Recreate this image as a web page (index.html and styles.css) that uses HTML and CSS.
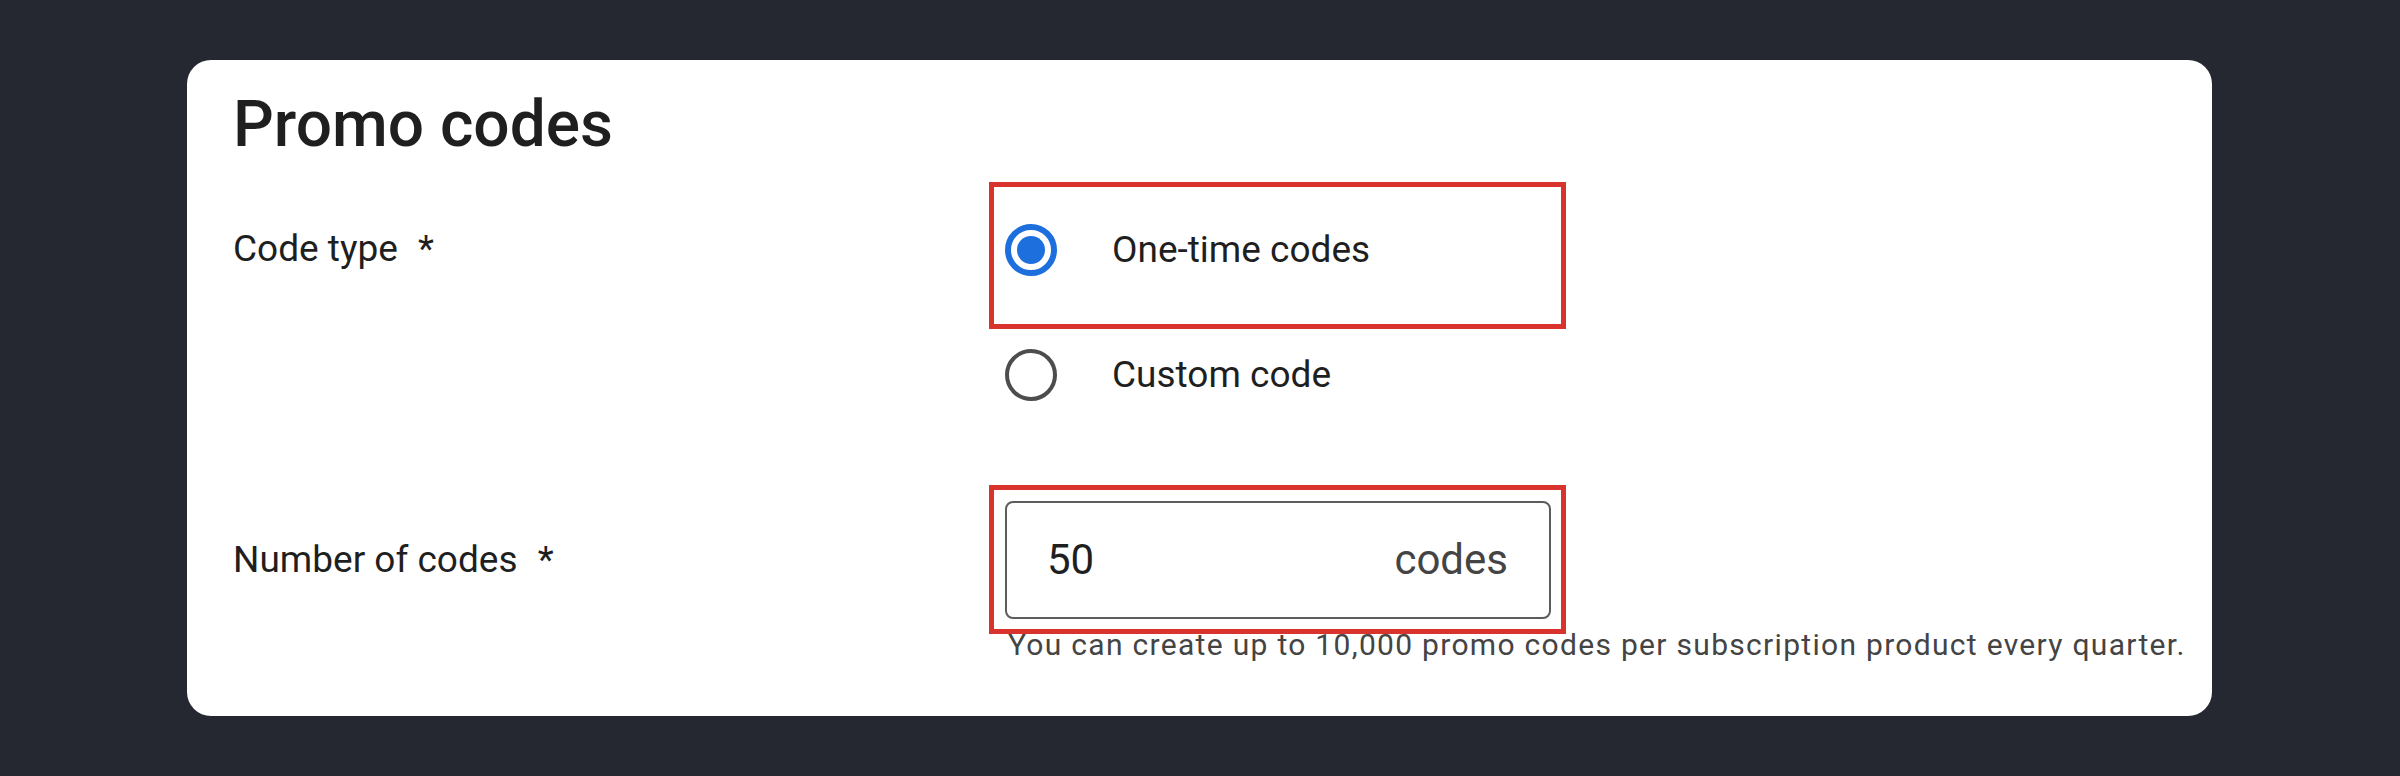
FILE: index.html
```html
<!DOCTYPE html>
<html lang="en">
<head>
<meta charset="utf-8">
<title>Promo codes</title>
<link rel="stylesheet" href="styles.css">
</head>
<body>
<main class="card">
  <h1 class="title">Promo codes</h1>
  <div class="form">
    <div class="label label-type">Code type <span class="req">*</span></div>
    <div class="control">
      <div class="highlight highlight-radio">
        <label class="option">
          <span class="radio radio-on"><span class="dot"></span></span>
          <span class="option-text">One-time codes</span>
        </label>
      </div>
      <label class="option option-plain">
        <span class="radio"></span>
        <span class="option-text">Custom code</span>
      </label>
    </div>

    <div class="label label-number">Number of codes <span class="req">*</span></div>
    <div class="control control-number">
      <div class="highlight highlight-input">
        <div class="input">
          <span class="value">50</span>
          <span class="suffix">codes</span>
        </div>
      </div>
      <p class="helper">You can create up to 10,000 promo codes per subscription product every quarter.</p>
    </div>
  </div>
</main>
</body>
</html>
```
FILE: styles.css
```css
html, body {
  margin: 0;
  padding: 0;
}
body {
  background: #252830;
  width: 2400px;
  height: 776px;
  overflow: hidden;
  font-family: Roboto, "Liberation Sans", sans-serif;
  color: #1f1f1f;
}
.card {
  box-sizing: border-box;
  margin: 60px 0 0 187px;
  width: 2025px;
  height: 656px;
  background: #ffffff;
  border-radius: 24px;
  padding: 29px 46px 0 46px;
}
.title {
  margin: 0;
  font-size: 64px;
  line-height: 72px;
  font-weight: 500;
  color: #1f1f1f;
}
.form {
  margin-top: 21px;
  display: grid;
  grid-template-columns: 756px 1fr;
}
.label {
  font-size: 37px;
  line-height: 44px;
  color: #1f1f1f;
}
.label-type { padding-top: 45px; }
.label-number { padding-top: 137px; }
.control-number { padding-top: 84px; }
.req { margin-left: 11px; }
.highlight {
  border: 5px solid #d8332c;
  box-sizing: border-box;
  width: 577px;
}
.highlight-radio {
  height: 147px;
  padding: 37px 0 0 11px;
}
.option {
  display: flex;
  align-items: center;
  height: 52px;
  gap: 55px;
}
.option-plain {
  margin-top: 20px;
  padding-left: 16px;
}
.option-text {
  font-size: 37px;
  line-height: 52px;
  color: #1f1f1f;
}
.radio {
  box-sizing: border-box;
  width: 52px;
  height: 52px;
  border-radius: 50%;
  border: 4px solid #4d4d4d;
  display: flex;
  align-items: center;
  justify-content: center;
  flex: none;
}
.radio-on {
  border: 6px solid #1c6fdc;
}
.dot {
  width: 28px;
  height: 28px;
  border-radius: 50%;
  background: #1c6fdc;
}
.highlight-input {
  height: 149px;
  padding: 11px 0 0 11px;
}
.input {
  box-sizing: border-box;
  width: 546px;
  height: 118px;
  border: 2px solid #5c5c5c;
  border-radius: 8px;
  display: flex;
  align-items: center;
  justify-content: space-between;
  padding: 0 41px 0 40px;
  font-size: 42px;
  line-height: 50px;
}
.value { color: #1f1f1f; }
.suffix { color: #444444; }
.helper {
  margin: -5px 0 0 19px;
  font-size: 30px;
  line-height: 32px;
  letter-spacing: 1.3px;
  color: #444444;
  white-space: nowrap;
}
```
